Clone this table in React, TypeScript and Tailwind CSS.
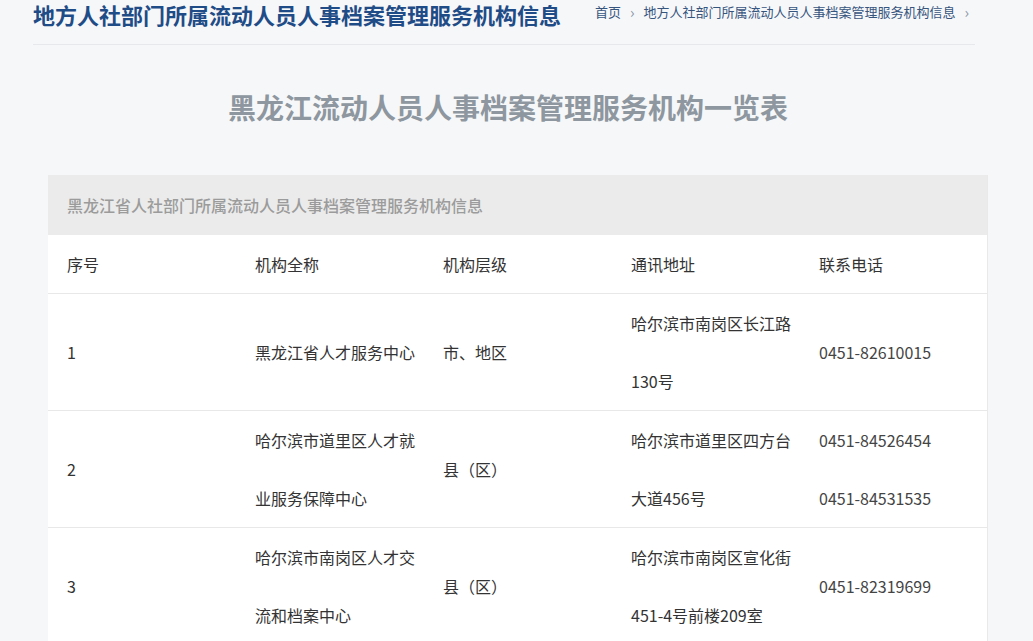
const rows = [
  {
    no: '1',
    name: '黑龙江省人才服务中心',
    level: '市、地区',
    addr: '哈尔滨市南岗区长江路130号',
    tel: ['0451-82610015'],
  },
  {
    no: '2',
    name: '哈尔滨市道里区人才就业服务保障中心',
    level: '县（区）',
    addr: '哈尔滨市道里区四方台大道456号',
    tel: ['0451-84526454', '0451-84531535'],
  },
  {
    no: '3',
    name: '哈尔滨市南岗区人才交流和档案中心',
    level: '县（区）',
    addr: '哈尔滨市南岗区宣化街451-4号前楼209室',
    tel: ['0451-82319699'],
  },
];

const Cell = ({ children }: { children: React.ReactNode }) => (
  <div className="w-[188px] shrink-0 pl-[19px] pr-[6px] flex items-center break-all">
    <div>{children}</div>
  </div>
);

export default function App() {
  return (
    <div
      className="min-h-screen bg-[#f6f7f9] text-[#333]"
      style={{ fontFamily: '"Noto Sans CJK SC", "Noto Sans", sans-serif' }}
    >
      <div className="ml-[33px] w-[942px]">
        <div className="h-[45px] border-b border-[#e6e8eb] flex justify-between items-start">
          <h1 className="text-[22px] leading-[28px] font-bold text-[#1f4c87]">
            地方人社部门所属流动人员人事档案管理服务机构信息
          </h1>
          <div className="flex items-center gap-[9px] text-[13px] leading-[24px] text-[#36557e] pr-[6px]">
            <span>首页</span>
            <span className="text-[15px] text-[#8a96a6]">›</span>
            <span>地方人社部门所属流动人员人事档案管理服务机构信息</span>
            <span className="text-[15px] text-[#8a96a6]">›</span>
          </div>
        </div>
        <div className="pt-[47px] pb-[53px] pl-[8px] text-center text-[28px] leading-[30px] font-bold text-[#8e979f]">
          黑龙江流动人员人事档案管理服务机构一览表
        </div>
      </div>

      <div className="ml-[48px] w-[940px] bg-white border-r border-[#e9e9e9]">
        <div className="h-[60px] bg-[#ebebeb] pl-[19px] text-[16px] leading-[60px] font-medium text-[#9b9b9b]">
          黑龙江省人社部门所属流动人员人事档案管理服务机构信息
        </div>
        <div className="text-[16px] leading-[58px]">
          <div className="flex border-b border-[#e8e8e8]">
            <Cell>序号</Cell>
            <Cell>机构全称</Cell>
            <Cell>机构层级</Cell>
            <Cell>通讯地址</Cell>
            <Cell>联系电话</Cell>
          </div>
          {rows.map((r) => (
            <div key={r.no} className="flex border-b border-[#e8e8e8]">
              <Cell>{r.no}</Cell>
              <Cell>{r.name}</Cell>
              <Cell>{r.level}</Cell>
              <Cell>{r.addr}</Cell>
              <Cell>
                {r.tel.map((t) => (
                  <div key={t} className="text-[#444]">
                    {t}
                  </div>
                ))}
              </Cell>
            </div>
          ))}
        </div>
      </div>
    </div>
  );
}
